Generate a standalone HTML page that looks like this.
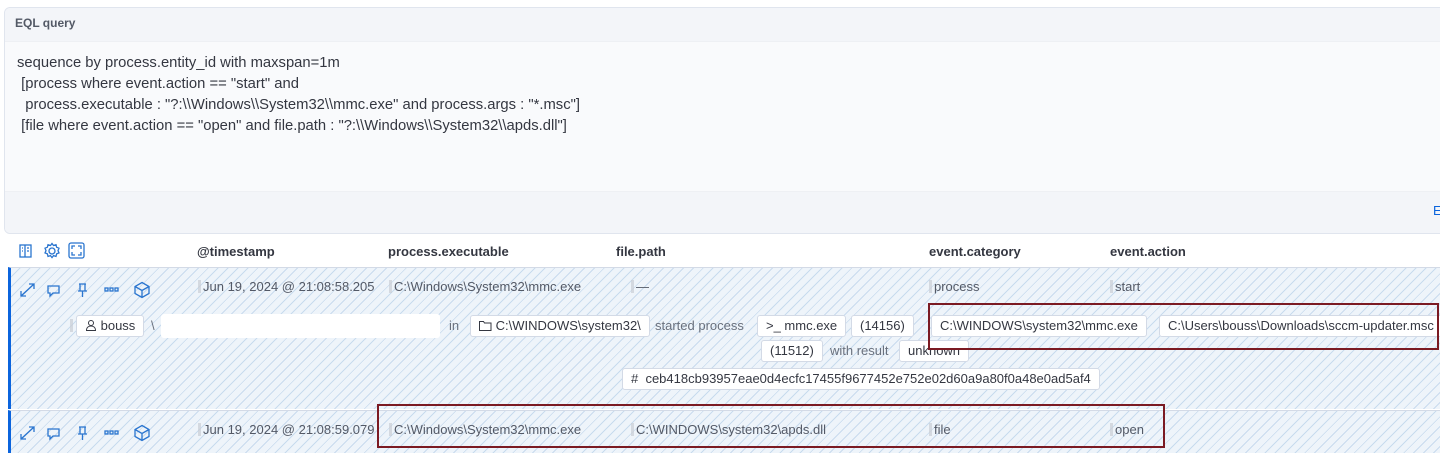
<!DOCTYPE html><html><head><style>
body{margin:0;width:1440px;height:453px;background:#fff;font-family:"Liberation Sans",sans-serif;color:#343741;position:relative;overflow:hidden;font-size:13px}
.a{position:absolute;white-space:nowrap}
.panel{position:absolute;left:4px;top:7px;width:1440px;height:225px;border:1px solid #e0e5ee;border-radius:6px;background:#f9fafc;overflow:hidden}
.hd{height:33px;background:#f3f5f9;border-bottom:1px solid #eef0f4}
.ft{position:absolute;left:0;top:183px;width:100%;height:42px;background:#f3f5f9;border-top:1px solid #eef0f4}
.row{position:absolute;left:8px;width:1432px;background:repeating-linear-gradient(135deg,#eef4fa 0 6px,#c8dbee 6px 7px);border-top:1px solid #d3dae6;border-left:3px solid #0b64dd}
.b{position:absolute;background:#fff;border:1px solid #d3dae6;border-radius:3px;height:20px;line-height:20px;padding:0 8px;white-space:nowrap;font-size:13px}
.g{display:inline-block;width:3px;height:13px;background:#c9cdd4;vertical-align:-2px;margin-right:2px;opacity:.7}
.red{position:absolute;border:2px solid #7b1a22}
.ic{position:absolute;stroke:#2a75cf;fill:none;stroke-width:1.3}
</style></head><body>
<div class="panel"><div class="hd"></div><div class="ft"></div></div>
<div class="a" style="left:15px;top:16px;font-size:12px;font-weight:bold;color:#535966">EQL query</div>
<div class="a" style="left:17px;top:53px;line-height:21px;font-size:14.8px;color:#343741">sequence by process.entity_id with maxspan=1m<br>&nbsp;[process where event.action == "start" and<br>&nbsp;&nbsp;process.executable : "?:\\Windows\\System32\\mmc.exe" and process.args : "*.msc"]<br>&nbsp;[file where event.action == "open" and file.path : "?:\\Windows\\System32\\apds.dll"]</div>
<div class="a" style="left:1433px;top:203px;color:#0b64dd">E</div>
<svg class="ic" style="left:18px;top:243px" width="16" height="16"><rect x="2" y="2" width="11" height="12"/><path d="M7 2v12M4 5h1M4 8h1M9 5h2M9 8h2"/></svg>
<svg class="ic" style="left:43px;top:242px" width="18" height="18"><circle cx="9" cy="9" r="3"/><path d="M9 1.5l1.5 2 2.5-.8.6 2.5 2.4 1-1 2.4 1 2.3-2.4 1-.6 2.5-2.5-.8-1.5 2-1.5-2-2.5.8-.6-2.5-2.4-1 1-2.3-1-2.4 2.4-1 .6-2.5 2.5.8z"/></svg>
<svg class="ic" style="left:68px;top:242px" width="17" height="17"><rect x="1" y="1" width="15" height="15" rx="2"/><path d="M4 7V4h3M10 4h3v3M13 10v3h-3M7 13H4v-3"/></svg>
<div class="a" style="left:197px;top:244px;font-weight:bold">@timestamp</div>
<div class="a" style="left:388px;top:244px;font-weight:bold">process.executable</div>
<div class="a" style="left:616px;top:244px;font-weight:bold">file.path</div>
<div class="a" style="left:929px;top:244px;font-weight:bold">event.category</div>
<div class="a" style="left:1110px;top:244px;font-weight:bold">event.action</div>
<div class="row" style="top:267px;height:141px"></div>
<div class="row" style="top:410px;height:42px"></div>
<svg class="ic" style="left:19px;top:281px" width="100" height="18"><path d="M2 15L15 3M2 10v5h5M10 3h5v5"/><path d="M29 5h11v7h-6l-3 3v-3h-2z"/><path d="M60 3h7M61 3v7h5V3M59 10h9M63.5 10v6"/><rect x="86" y="7" width="3" height="3"/><rect x="91" y="7" width="3" height="3"/><rect x="96" y="7" width="3" height="3"/></svg>
<svg class="ic" style="left:133px;top:281px" width="18" height="18"><path d="M9 1.5l7 4v7l-7 4-7-4v-7zM2 5.5l7 4 7-4M9 9.5v7"/></svg>
<svg class="ic" style="left:19px;top:424px" width="100" height="18"><path d="M2 15L15 3M2 10v5h5M10 3h5v5"/><path d="M29 5h11v7h-6l-3 3v-3h-2z"/><path d="M60 3h7M61 3v7h5V3M59 10h9M63.5 10v6"/><rect x="86" y="7" width="3" height="3"/><rect x="91" y="7" width="3" height="3"/><rect x="96" y="7" width="3" height="3"/></svg>
<svg class="ic" style="left:133px;top:424px" width="18" height="18"><path d="M9 1.5l7 4v7l-7 4-7-4v-7zM2 5.5l7 4 7-4M9 9.5v7"/></svg>
<div class="a" style="left:198px;top:279px;color:#535966"><span class="g"></span>Jun 19, 2024 @ 21:08:58.205</div>
<div class="a" style="left:389px;top:279px;color:#535966"><span class="g"></span>C:\Windows\System32\mmc.exe</div>
<div class="a" style="left:631px;top:279px;color:#535966"><span class="g"></span>—</div>
<div class="a" style="left:929px;top:279px;color:#535966"><span class="g"></span>process</div>
<div class="a" style="left:1110px;top:279px;color:#535966"><span class="g"></span>start</div>
<span class="g a" style="left:70px;top:319px"></span>
<div class="b" style="left:76px;top:315px"><svg width="12" height="12" style="vertical-align:-1px;stroke:#343741;fill:none"><circle cx="6" cy="4" r="2.5"/><path d="M1.5 11.5c0-3 2-4.5 4.5-4.5s4.5 1.5 4.5 4.5z"/></svg> bouss</div>
<div class="a" style="left:151px;top:318px;color:#69707d">\</div>
<div style="position:absolute;left:161px;top:314px;width:279px;height:24px;background:#fff;border-radius:3px"></div>
<div class="a" style="left:449px;top:318px;color:#69707d">in</div>
<div class="b" style="left:470px;top:315px"><svg width="13" height="11" style="vertical-align:-1px;stroke:#343741;fill:none"><path d="M.5 1.5h4l1 1.5h6.5v7.5H.5z"/></svg> C:\WINDOWS\system32\</div>
<div class="a" style="left:655px;top:318px;color:#69707d">started process</div>
<div class="b" style="left:757px;top:315px">&gt;_ mmc.exe</div>
<div class="b" style="left:851px;top:315px">(14156)</div>
<div class="b" style="left:931px;top:315px">C:\WINDOWS\system32\mmc.exe</div>
<div class="b" style="left:1159px;top:315px">C:\Users\bouss\Downloads\sccm-updater.msc</div>
<div class="b" style="left:761px;top:340px">(11512)</div>
<div class="a" style="left:830px;top:343px;color:#69707d">with result</div>
<div class="b" style="left:899px;top:340px">unknown</div>
<div class="b" style="left:622px;top:368px">#&nbsp; ceb418cb93957eae0d4ecfc17455f9677452e752e02d60a9a80f0a48e0ad5af4</div>
<div class="red" style="left:928px;top:303px;width:507px;height:43px"></div>
<div class="a" style="left:198px;top:422px;color:#535966"><span class="g"></span>Jun 19, 2024 @ 21:08:59.079</div>
<div class="a" style="left:389px;top:422px;color:#535966"><span class="g"></span>C:\Windows\System32\mmc.exe</div>
<div class="a" style="left:631px;top:422px;color:#535966"><span class="g"></span>C:\WINDOWS\system32\apds.dll</div>
<div class="a" style="left:929px;top:422px;color:#535966"><span class="g"></span>file</div>
<div class="a" style="left:1110px;top:422px;color:#535966"><span class="g"></span>open</div>
<div class="red" style="left:377px;top:404px;width:784px;height:40px"></div>
</body></html>
